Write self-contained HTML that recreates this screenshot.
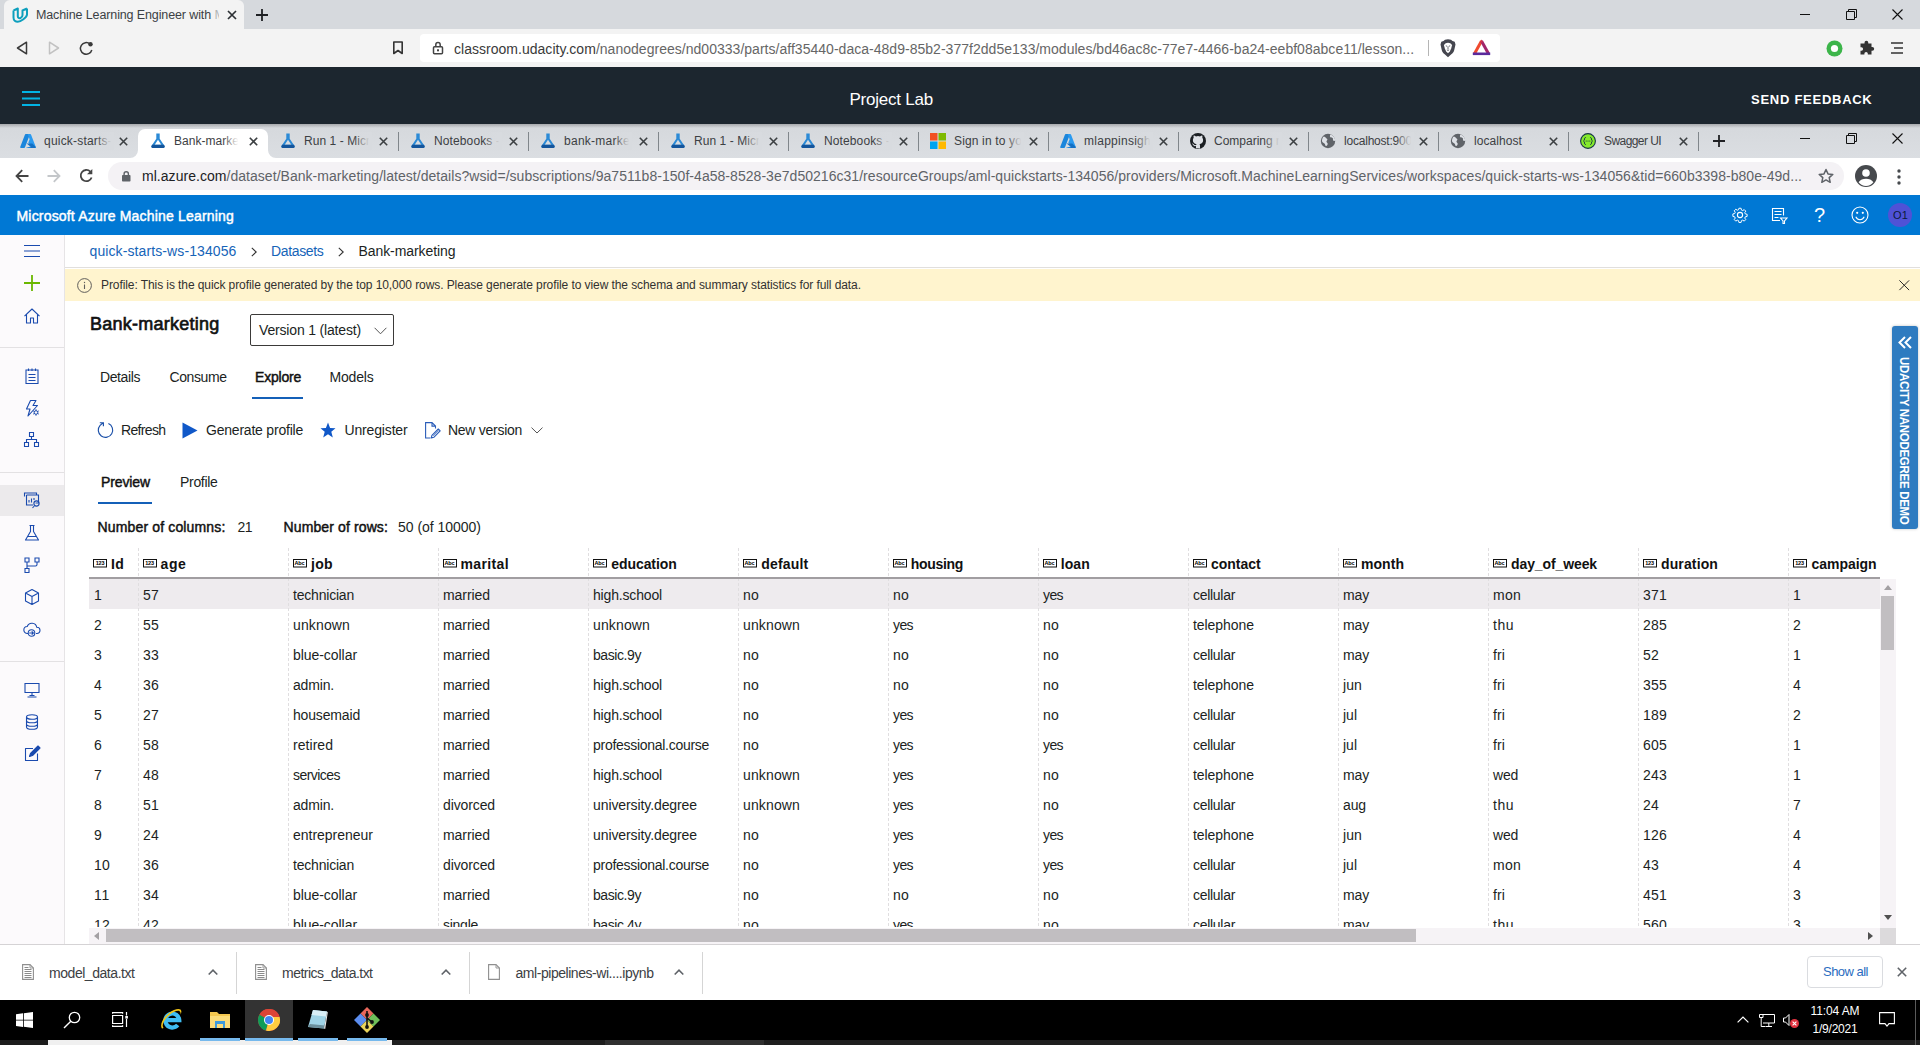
<!DOCTYPE html>
<html><head><meta charset="utf-8"><title>Bank-marketing</title>
<style>
*{box-sizing:border-box;margin:0;padding:0}
html,body{width:1920px;height:1045px;overflow:hidden;background:#fff;font-family:"Liberation Sans",sans-serif;color:#201f1e}
.abs{position:absolute}
#root{position:relative;width:1920px;height:1045px;overflow:hidden}
.t{position:absolute;white-space:nowrap}
svg{position:absolute;overflow:visible}
</style></head><body><div id="root">
<!--OUTER-->
<div class="abs" style="left:0px;top:0px;width:1920px;height:29px;background:#d6d9dd;"></div>
<div class="abs" style="left:4px;top:0px;width:240px;height:29px;background:#f3f3f3;border-radius:6px 6px 0 0;"></div>
<div class="abs" style="left:0px;top:29px;width:1920px;height:38px;background:#f3f3f3;"></div>
<div class="abs" style="left:420px;top:34px;width:1080px;height:28px;background:#fff;border-radius:4px;"></div>
<svg style="left:11.5px;top:7px" width="17" height="16" viewBox="0 0 17 16"><path d="M1.500 3.500V10.500C1.500 13.200 3.500 14.800 5.800 14.800 8.500 14.800 15 10.500 15 7.500V1.500M1.500 3.500L5.800 1.500V9.300C5.800 10.800 7 11.500 8.500 11 9.800 10.500 10.500 9.500 10.500 8.300V3.500L15 1.500" fill="none" stroke="#0d9fbd" stroke-width="2" stroke-linejoin="round" stroke-linecap="butt"/></svg>
<div class="t" style="left:36px;top:6px;font-size:12.5px;line-height:18px;color:#3b3f44;letter-spacing:-0.120px;">Machine Learning Engineer with</div>
<div class="t" style="left:214.5px;top:6px;font-size:12.5px;line-height:18px;color:#3b3f44;width:4px;overflow:hidden;opacity:.35;">M</div>
<svg style="left:227px;top:10px" width="10" height="10" viewBox="0 0 10 10"><path d="M1 1l8 8M9 1l-8 8" stroke="#2d3135" stroke-width="1.700" fill="none"/></svg>
<svg style="left:256px;top:9px" width="12" height="12" viewBox="0 0 12 12"><path d="M6 0v12M0 6h12" stroke="#1f2124" stroke-width="1.800" fill="none"/></svg>
<svg style="left:1800px;top:14px" width="10" height="2" viewBox="0 0 10 2"><path d="M0 .5h10" stroke="#111" stroke-width="1"/></svg>
<svg style="left:1846px;top:9px" width="11" height="11" viewBox="0 0 11 11"><path d="M.5 2.500h8v8h-8zM2.500 2.500v-2h8v8h-2" stroke="#111" stroke-width="1" fill="none"/></svg>
<svg style="left:1892px;top:9px" width="11" height="11" viewBox="0 0 11 11"><path d="M.5.5l10 10M10.500.5l-10 10" stroke="#111" stroke-width="1.100" fill="none"/></svg>
<svg style="left:16px;top:41px" width="12" height="14" viewBox="0 0 12 14"><path d="M10.500 1.200L1.500 7l9 5.800z" stroke="#3a3a3a" stroke-width="1.500" fill="none" stroke-linejoin="round"/></svg>
<svg style="left:48px;top:41px" width="12" height="14" viewBox="0 0 12 14"><path d="M1.500 1.200L10.500 7l-9 5.800z" stroke="#c2c2c2" stroke-width="1.500" fill="none" stroke-linejoin="round"/></svg>
<svg style="left:79px;top:41px" width="15" height="15" viewBox="0 0 15 15"><path d="M12.800 9A5.800 5.800 0 1 1 11 3" stroke="#3a3a3a" stroke-width="1.500" fill="none"/><circle cx="11.500" cy="3.300" r="2.200" fill="#3a3a3a"/></svg>
<svg style="left:392px;top:41px" width="12" height="14" viewBox="0 0 12 14"><path d="M1.800 1h8.400v11.500L6 9.500l-4.200 3z" stroke="#333" stroke-width="1.600" fill="none" stroke-linejoin="round"/></svg>
<svg style="left:432px;top:41px" width="12" height="14" viewBox="0 0 12 14"><rect x="1.500" y="5.800" width="9" height="7" rx="1" stroke="#444" stroke-width="1.500" fill="none"/><path d="M3.800 5.800V3.800a2.200 2.200 0 0 1 4.400 0v2" stroke="#444" stroke-width="1.500" fill="none"/><rect x="5" y="8.300" width="2" height="2" fill="#444"/></svg>
<div class="t" style="left:454px;top:38.500px;font-size:14px;line-height:20px;color:#666;letter-spacing:0.025px"><span style="color:#3a3a3a">classroom.udacity.com</span>/nanodegrees/nd00333/parts/aff35440-daca-48d9-85b2-377f2dd5e133/modules/bd46ac8c-77e7-4466-ba24-eebf08abce11/lesson...</div>
<div class="abs" style="left:1428px;top:40px;width:1px;height:16px;background:#b5b5b5;"></div>
<svg style="left:1440px;top:38.5px" width="16" height="18.5" viewBox="0 0 16 18.5"><path d="M8 .3l3 .4 1.500 1.400 2.200.7.800 2.600-1.300 5.800c-.4 1.700-1.500 3-2.900 4.100L8 18.200l-3.300-2.900c-1.400-1.100-2.500-2.400-2.900-4.100L.5 5.400l.8-2.600 2.200-.7L5 .7z" fill="#45464f"/><path d="M8 3.800l2.300.5 1.800 1.700-.9 3.600-1.400 2.800L8 14.300l-1.800-1.900-1.400-2.800-.9-3.600 1.800-1.700z" fill="#fff"/><path d="M5.800 6.800l1.400.5M10.200 6.800l-1.400.5M8 7.500v2.700M6.900 10.800l1.100.7 1.100-.7" stroke="#45464f" stroke-width=".8" fill="none"/></svg>
<svg style="left:1472px;top:39.3px" width="19" height="17" viewBox="0 0 19 17"><path d="M2.200 15.200L9.500 2" stroke="#f04a2e" stroke-width="3" stroke-linecap="butt"/><path d="M16.800 15.200L9.500 2" stroke="#a0256b" stroke-width="3"/><path d="M.8 14.800h17.400" stroke="#5a2a9c" stroke-width="2.600"/><path d="M9.500 .6l1.700 3h-3.400z" fill="#d0304a"/></svg>
<svg style="left:1826px;top:40px" width="17" height="17" viewBox="0 0 17 17"><circle cx="8.500" cy="8.500" r="8" fill="#3cb54a"/><circle cx="8.500" cy="8.500" r="3.600" fill="#fff"/></svg>
<svg style="left:1858px;top:40px" width="17" height="17" viewBox="0 0 17 17"><path d="M6.500 2.700a1.900 1.900 0 0 1 3.800 0v.8h3.200v3.400h.8a1.900 1.900 0 0 1 0 3.800h-.8v3.800H9.800v-.9a1.700 1.700 0 0 0-3.400 0v.9H2.500v-3.800h.9a1.700 1.700 0 0 0 0-3.400h-.9V3.500h4z" fill="#333"/></svg>
<svg style="left:1890px;top:41px" width="14" height="14" viewBox="0 0 14 14"><path d="M1 2h12M4 7h9M1 12h12" stroke="#333" stroke-width="1.700" fill="none"/></svg>
<div class="abs" style="left:0px;top:67px;width:1920px;height:57px;background:#1c262f;"></div>
<svg style="left:22px;top:91px" width="18" height="15" viewBox="0 0 18 15"><path d="M0 1h18M0 7.500h18M0 14h18" stroke="#02b3e4" stroke-width="1.800" fill="none"/></svg>
<div class="t" style="left:849.5px;top:88px;font-size:17px;line-height:24px;color:#fff;letter-spacing:-0.227px;">Project Lab</div>
<div class="t" style="left:1751px;top:90.7px;font-size:13px;line-height:18px;color:#fff;font-weight:bold;letter-spacing:0.734px;">SEND FEEDBACK</div>
<!--INNER-->
<div class="abs" style="left:0px;top:124px;width:1920px;height:34px;background:linear-gradient(180deg,#d5d8dc,#dbdee2);"></div>
<div class="abs" style="left:0px;top:124px;width:1920px;height:4px;background:linear-gradient(180deg,rgba(0,0,0,.22),rgba(0,0,0,0));"></div>
<div class="abs" style="left:138px;top:129px;width:130px;height:29px;background:#fff;border-radius:7px 7px 0 0;"></div>
<svg style="left:130px;top:150px" width="8" height="8" viewBox="0 0 8 8"><path d="M8 0v8H0a8 8 0 0 0 8-8z" fill="#fff"/></svg>
<svg style="left:268px;top:150px" width="8" height="8" viewBox="0 0 8 8"><path d="M0 0v8h8a8 8 0 0 1-8-8z" fill="#fff"/></svg>
<div class="abs" style="left:0px;top:158px;width:1920px;height:37px;background:#fff;"></div>
<div class="abs" style="left:108px;top:162px;width:1736px;height:28px;background:#f4f2f5;border-radius:14px;"></div>
<svg style="left:20px;top:133px" width="16" height="16" viewBox="0 0 16 16"><path d="M5.800 1h4.300L5 14.300c-.1.400-.5.700-.9.700H.8c-.5 0-.8-.5-.6-.9L4.900 1.700c.1-.4.500-.7.900-.7z" fill="#1b86dc"/><path d="M10.200 1c.4 0 .8.300.9.700l4.700 12.400c.2.400-.1.900-.6.900H5.800l5.300-1.800c.3-.1.400-.4.200-.600L8.300 9.800l1.300-3.500-1.900-5.300z" fill="#2a9af0"/><path d="M12.300 10.500H6.600l4.700 3.800-5.500.7h9.400c.5 0 .8-.5.600-.9z" fill="#1470c4"/></svg>
<div class="t" style="left:44px;top:132.5px;font-size:12px;line-height:17px;color:#3c4043;letter-spacing:0.204px;width:68px;overflow:hidden;">quick-starts-</div>
<div class="abs" style="left:96px;top:132px;width:18px;height:18px;background:linear-gradient(90deg,rgba(222,225,230,0),#d8dbdf 85%);"></div>
<svg style="left:119px;top:137px" width="9" height="9" viewBox="0 0 9 9"><path d="M.8.800l7.400 7.400M8.200.800L.8 8.200" stroke="#3c4043" stroke-width="1.600" fill="none"/></svg>
<svg style="left:150px;top:133px" width="16" height="16" viewBox="0 0 16 16"><path d="M6.300.5h3.400v5.300l4.700 6.900c.7 1-.1 2.300-1.200 2.300H2.800c-1.100 0-1.900-1.300-1.200-2.300l4.700-6.900z" fill="#2b8ad6"/><path d="M8 6.800l3.300 5H4.700z" fill="#fff"/><path d="M2.100 11.800h11.800l.6.900c.7 1-.1 2.300-1.200 2.300H2.800c-1.100 0-1.900-1.300-1.200-2.300z" fill="#14559b"/></svg>
<div class="t" style="left:174px;top:132.5px;font-size:12px;line-height:17px;color:#3c4043;letter-spacing:0.031px;width:65px;overflow:hidden;">Bank-marke</div>
<div class="abs" style="left:223px;top:132px;width:18px;height:18px;background:linear-gradient(90deg,rgba(255,255,255,0),#fff 85%);"></div>
<svg style="left:249px;top:137px" width="9" height="9" viewBox="0 0 9 9"><path d="M.8.800l7.400 7.400M8.200.800L.8 8.200" stroke="#3c4043" stroke-width="1.600" fill="none"/></svg>
<svg style="left:280px;top:133px" width="16" height="16" viewBox="0 0 16 16"><path d="M6.300.5h3.400v5.300l4.700 6.900c.7 1-.1 2.300-1.200 2.300H2.800c-1.100 0-1.900-1.300-1.200-2.300l4.700-6.900z" fill="#2b8ad6"/><path d="M8 6.800l3.300 5H4.700z" fill="#d8dbdf"/><path d="M2.100 11.800h11.800l.6.900c.7 1-.1 2.300-1.200 2.300H2.800c-1.100 0-1.900-1.300-1.200-2.300z" fill="#14559b"/></svg>
<div class="t" style="left:304px;top:132.5px;font-size:12px;line-height:17px;color:#3c4043;letter-spacing:0.055px;width:66px;overflow:hidden;">Run 1 - Micr</div>
<div class="abs" style="left:354px;top:132px;width:18px;height:18px;background:linear-gradient(90deg,rgba(222,225,230,0),#d8dbdf 85%);"></div>
<svg style="left:379px;top:137px" width="9" height="9" viewBox="0 0 9 9"><path d="M.8.800l7.400 7.400M8.200.800L.8 8.200" stroke="#3c4043" stroke-width="1.600" fill="none"/></svg>
<div class="abs" style="left:398px;top:132px;width:1px;height:19px;background:#80868b;"></div>
<svg style="left:410px;top:133px" width="16" height="16" viewBox="0 0 16 16"><path d="M6.300.5h3.400v5.300l4.700 6.900c.7 1-.1 2.300-1.200 2.300H2.800c-1.100 0-1.900-1.300-1.200-2.300l4.700-6.900z" fill="#2b8ad6"/><path d="M8 6.800l3.300 5H4.700z" fill="#d8dbdf"/><path d="M2.100 11.800h11.800l.6.900c.7 1-.1 2.300-1.200 2.300H2.800c-1.100 0-1.900-1.300-1.200-2.300z" fill="#14559b"/></svg>
<div class="t" style="left:434px;top:132.5px;font-size:12px;line-height:17px;color:#3c4043;letter-spacing:0.118px;width:66px;overflow:hidden;">Notebooks -</div>
<div class="abs" style="left:484px;top:132px;width:18px;height:18px;background:linear-gradient(90deg,rgba(222,225,230,0),#d8dbdf 85%);"></div>
<svg style="left:509px;top:137px" width="9" height="9" viewBox="0 0 9 9"><path d="M.8.800l7.400 7.400M8.200.800L.8 8.200" stroke="#3c4043" stroke-width="1.600" fill="none"/></svg>
<div class="abs" style="left:528px;top:132px;width:1px;height:19px;background:#80868b;"></div>
<svg style="left:540px;top:133px" width="16" height="16" viewBox="0 0 16 16"><path d="M6.300.5h3.400v5.300l4.700 6.900c.7 1-.1 2.300-1.200 2.300H2.800c-1.100 0-1.900-1.300-1.200-2.300l4.700-6.900z" fill="#2b8ad6"/><path d="M8 6.800l3.300 5H4.700z" fill="#d8dbdf"/><path d="M2.100 11.800h11.800l.6.900c.7 1-.1 2.300-1.200 2.300H2.800c-1.100 0-1.900-1.300-1.200-2.300z" fill="#14559b"/></svg>
<div class="t" style="left:564px;top:132.5px;font-size:12px;line-height:17px;color:#3c4043;letter-spacing:0.264px;width:66px;overflow:hidden;">bank-marke</div>
<div class="abs" style="left:614px;top:132px;width:18px;height:18px;background:linear-gradient(90deg,rgba(222,225,230,0),#d8dbdf 85%);"></div>
<svg style="left:639px;top:137px" width="9" height="9" viewBox="0 0 9 9"><path d="M.8.800l7.400 7.400M8.200.800L.8 8.200" stroke="#3c4043" stroke-width="1.600" fill="none"/></svg>
<div class="abs" style="left:658px;top:132px;width:1px;height:19px;background:#80868b;"></div>
<svg style="left:670px;top:133px" width="16" height="16" viewBox="0 0 16 16"><path d="M6.300.5h3.400v5.300l4.700 6.900c.7 1-.1 2.300-1.200 2.300H2.800c-1.100 0-1.900-1.300-1.200-2.300l4.700-6.900z" fill="#2b8ad6"/><path d="M8 6.800l3.300 5H4.700z" fill="#d8dbdf"/><path d="M2.100 11.800h11.800l.6.900c.7 1-.1 2.300-1.200 2.300H2.800c-1.100 0-1.900-1.300-1.200-2.300z" fill="#14559b"/></svg>
<div class="t" style="left:694px;top:132.5px;font-size:12px;line-height:17px;color:#3c4043;letter-spacing:0.055px;width:66px;overflow:hidden;">Run 1 - Micr</div>
<div class="abs" style="left:744px;top:132px;width:18px;height:18px;background:linear-gradient(90deg,rgba(222,225,230,0),#d8dbdf 85%);"></div>
<svg style="left:769px;top:137px" width="9" height="9" viewBox="0 0 9 9"><path d="M.8.800l7.400 7.400M8.200.800L.8 8.200" stroke="#3c4043" stroke-width="1.600" fill="none"/></svg>
<div class="abs" style="left:788px;top:132px;width:1px;height:19px;background:#80868b;"></div>
<svg style="left:800px;top:133px" width="16" height="16" viewBox="0 0 16 16"><path d="M6.300.5h3.400v5.300l4.700 6.900c.7 1-.1 2.300-1.200 2.300H2.800c-1.100 0-1.900-1.300-1.200-2.300l4.700-6.900z" fill="#2b8ad6"/><path d="M8 6.800l3.300 5H4.700z" fill="#d8dbdf"/><path d="M2.100 11.800h11.800l.6.900c.7 1-.1 2.300-1.200 2.300H2.800c-1.100 0-1.900-1.300-1.200-2.300z" fill="#14559b"/></svg>
<div class="t" style="left:824px;top:132.5px;font-size:12px;line-height:17px;color:#3c4043;letter-spacing:0.118px;width:66px;overflow:hidden;">Notebooks -</div>
<div class="abs" style="left:874px;top:132px;width:18px;height:18px;background:linear-gradient(90deg,rgba(222,225,230,0),#d8dbdf 85%);"></div>
<svg style="left:899px;top:137px" width="9" height="9" viewBox="0 0 9 9"><path d="M.8.800l7.400 7.400M8.200.800L.8 8.200" stroke="#3c4043" stroke-width="1.600" fill="none"/></svg>
<div class="abs" style="left:918px;top:132px;width:1px;height:19px;background:#80868b;"></div>
<svg style="left:930px;top:133px" width="16" height="16" viewBox="0 0 16 16"><rect x="0" y="0" width="7.500" height="7.500" fill="#f25022"/><rect x="8.500" y="0" width="7.500" height="7.500" fill="#7fba00"/><rect x="0" y="8.500" width="7.500" height="7.500" fill="#00a4ef"/><rect x="8.500" y="8.500" width="7.500" height="7.500" fill="#ffb900"/></svg>
<div class="t" style="left:954px;top:132.5px;font-size:12px;line-height:17px;color:#3c4043;letter-spacing:0.151px;width:68px;overflow:hidden;">Sign in to yo</div>
<div class="abs" style="left:1006px;top:132px;width:18px;height:18px;background:linear-gradient(90deg,rgba(222,225,230,0),#d8dbdf 85%);"></div>
<svg style="left:1029px;top:137px" width="9" height="9" viewBox="0 0 9 9"><path d="M.8.800l7.400 7.400M8.200.800L.8 8.200" stroke="#3c4043" stroke-width="1.600" fill="none"/></svg>
<div class="abs" style="left:1048px;top:132px;width:1px;height:19px;background:#80868b;"></div>
<svg style="left:1060px;top:133px" width="16" height="16" viewBox="0 0 16 16"><path d="M5.800 1h4.300L5 14.300c-.1.400-.5.700-.9.700H.8c-.5 0-.8-.5-.6-.9L4.900 1.700c.1-.4.500-.7.900-.7z" fill="#1b86dc"/><path d="M10.200 1c.4 0 .8.300.9.700l4.700 12.400c.2.400-.1.900-.6.900H5.800l5.300-1.800c.3-.1.400-.4.200-.600L8.300 9.800l1.300-3.500-1.900-5.300z" fill="#2a9af0"/><path d="M12.300 10.500H6.600l4.700 3.800-5.500.7h9.400c.5 0 .8-.5.600-.9z" fill="#1470c4"/></svg>
<div class="t" style="left:1084px;top:132.5px;font-size:12px;line-height:17px;color:#3c4043;letter-spacing:0.269px;width:67px;overflow:hidden;">mlappinsigh</div>
<div class="abs" style="left:1135px;top:132px;width:18px;height:18px;background:linear-gradient(90deg,rgba(222,225,230,0),#d8dbdf 85%);"></div>
<svg style="left:1159px;top:137px" width="9" height="9" viewBox="0 0 9 9"><path d="M.8.800l7.400 7.400M8.200.800L.8 8.200" stroke="#3c4043" stroke-width="1.600" fill="none"/></svg>
<div class="abs" style="left:1178px;top:132px;width:1px;height:19px;background:#80868b;"></div>
<svg style="left:1190px;top:133px" width="16" height="16" viewBox="0 0 16 16"><circle cx="8" cy="8" r="8" fill="#1b1f23"/><path d="M6 15.300v-2.200c-2.300.5-2.800-1-2.800-1-.4-.9-.9-1.200-.9-1.200-.7-.5.100-.5.100-.5.800.1 1.300.9 1.300.9.700 1.200 1.900.9 2.400.7.100-.5.300-.9.500-1.100-1.800-.2-3.700-.9-3.700-4 0-.9.300-1.600.8-2.200-.1-.2-.4-1 .1-2.100 0 0 .7-.2 2.200.8a7.500 7.500 0 0 1 4 0c1.500-1 2.200-.8 2.200-.8.400 1.100.2 1.900.1 2.100.5.600.8 1.300.8 2.200 0 3.100-1.900 3.800-3.700 4 .3.300.6.800.6 1.500v3z" fill="#dee1e6"/></svg>
<div class="t" style="left:1214px;top:132.5px;font-size:12px;line-height:17px;color:#3c4043;letter-spacing:-0.002px;width:66px;overflow:hidden;">Comparing r</div>
<div class="abs" style="left:1264px;top:132px;width:18px;height:18px;background:linear-gradient(90deg,rgba(222,225,230,0),#d8dbdf 85%);"></div>
<svg style="left:1289px;top:137px" width="9" height="9" viewBox="0 0 9 9"><path d="M.8.800l7.400 7.400M8.200.800L.8 8.200" stroke="#3c4043" stroke-width="1.600" fill="none"/></svg>
<div class="abs" style="left:1308px;top:132px;width:1px;height:19px;background:#80868b;"></div>
<svg style="left:1320px;top:133px" width="16" height="16" viewBox="0 0 16 16"><circle cx="8" cy="8" r="7.200" fill="#5f6368"/><path d="M3.200 3.800c1.200-.4 2.300 0 2.600 1 .3.900 1.500.8 1.600 1.800.1.800-1 1.300-.9 2.200.1.800 1.200 1 1.200 2s-.8 2.400-1.700 2.300c-.9-.1-.6-1.500-1.300-2.300-.7-.8-2.200-.9-2.600-2.200-.3-1 .2-3.500 1.100-4.800zM10 1.600c.4.900-.5 1.600.2 2.400.7.800 2 .3 2.600 1.200.5.700-.2 1.500.4 2.300.4.500 1.500.5 2 .1-.1-2.700-2.400-5.300-5.200-6z" fill="#dee1e6"/></svg>
<div class="t" style="left:1344px;top:132.5px;font-size:12px;line-height:17px;color:#3c4043;letter-spacing:-0.209px;width:68px;overflow:hidden;">localhost:900</div>
<div class="abs" style="left:1396px;top:132px;width:18px;height:18px;background:linear-gradient(90deg,rgba(222,225,230,0),#d8dbdf 85%);"></div>
<svg style="left:1419px;top:137px" width="9" height="9" viewBox="0 0 9 9"><path d="M.8.800l7.400 7.400M8.200.800L.8 8.200" stroke="#3c4043" stroke-width="1.600" fill="none"/></svg>
<div class="abs" style="left:1438px;top:132px;width:1px;height:19px;background:#80868b;"></div>
<svg style="left:1450px;top:133px" width="16" height="16" viewBox="0 0 16 16"><circle cx="8" cy="8" r="7.200" fill="#5f6368"/><path d="M3.200 3.800c1.200-.4 2.300 0 2.600 1 .3.900 1.500.8 1.600 1.800.1.800-1 1.300-.9 2.200.1.800 1.200 1 1.200 2s-.8 2.400-1.700 2.300c-.9-.1-.6-1.500-1.300-2.300-.7-.8-2.200-.9-2.600-2.200-.3-1 .2-3.500 1.100-4.800zM10 1.600c.4.900-.5 1.600.2 2.400.7.800 2 .3 2.600 1.200.5.700-.2 1.500.4 2.300.4.500 1.500.5 2 .1-.1-2.700-2.400-5.300-5.200-6z" fill="#dee1e6"/></svg>
<div class="t" style="left:1474px;top:132.5px;font-size:12px;line-height:17px;color:#3c4043;letter-spacing:0.071px;">localhost</div>
<svg style="left:1549px;top:137px" width="9" height="9" viewBox="0 0 9 9"><path d="M.8.800l7.400 7.400M8.200.800L.8 8.200" stroke="#3c4043" stroke-width="1.600" fill="none"/></svg>
<div class="abs" style="left:1568px;top:132px;width:1px;height:19px;background:#80868b;"></div>
<svg style="left:1580px;top:133px" width="16" height="16" viewBox="0 0 16 16"><circle cx="8" cy="8" r="7.400" fill="#85ea2d" stroke="#173647" stroke-width="1.100"/><path d="M5.800 4.500c-1.300 0-1.300.8-1.300 1.600 0 1-.3 1.600-1 1.900.7.300 1 .9 1 1.900 0 .8 0 1.600 1.300 1.600M10.200 4.500c1.300 0 1.300.8 1.300 1.600 0 1 .3 1.600 1 1.900-.7.300-1 .9-1 1.900 0 .8 0 1.600-1.300 1.600" fill="none" stroke="#173647" stroke-width="1"/><circle cx="6.200" cy="8" r=".6" fill="#173647"/><circle cx="8" cy="8" r=".6" fill="#173647"/><circle cx="9.800" cy="8" r=".6" fill="#173647"/></svg>
<div class="t" style="left:1604px;top:132.5px;font-size:12px;line-height:17px;color:#3c4043;letter-spacing:-0.570px;">Swagger UI</div>
<svg style="left:1679px;top:137px" width="9" height="9" viewBox="0 0 9 9"><path d="M.8.800l7.400 7.400M8.200.800L.8 8.200" stroke="#3c4043" stroke-width="1.600" fill="none"/></svg>
<div class="abs" style="left:1698px;top:132px;width:1px;height:19px;background:#80868b;"></div>
<svg style="left:1713px;top:135px" width="12" height="12" viewBox="0 0 12 12"><path d="M6 0v12M0 6h12" stroke="#202124" stroke-width="1.800" fill="none"/></svg>
<svg style="left:1800px;top:138px" width="10" height="2" viewBox="0 0 10 2"><path d="M0 .5h10" stroke="#111" stroke-width="1"/></svg>
<svg style="left:1846px;top:133px" width="11" height="11" viewBox="0 0 11 11"><path d="M.5 2.500h8v8h-8zM2.500 2.500v-2h8v8h-2" stroke="#111" stroke-width="1" fill="none"/></svg>
<svg style="left:1892px;top:133px" width="11" height="11" viewBox="0 0 11 11"><path d="M.5.5l10 10M10.500.5l-10 10" stroke="#111" stroke-width="1.100" fill="none"/></svg>
<svg style="left:15px;top:169px" width="14" height="14" viewBox="0 0 14 14"><path d="M13.500 7H1.800M7.200 1.200L1.500 7l5.700 5.800" stroke="#444" stroke-width="1.800" fill="none"/></svg>
<svg style="left:47px;top:169px" width="14" height="14" viewBox="0 0 14 14"><path d="M.5 7h11.700M6.800 1.200L12.500 7l-5.700 5.800" stroke="#c4c7ca" stroke-width="1.800" fill="none"/></svg>
<svg style="left:79px;top:168px" width="15" height="15" viewBox="0 0 15 15"><path d="M12.600 9.500A5.600 5.600 0 1 1 11.300 3.600" stroke="#444" stroke-width="1.800" fill="none"/><path d="M13.300 1v5.300H8z" fill="#444"/></svg>
<svg style="left:122px;top:170.5px" width="8.5" height="10.5" viewBox="0 0 8.5 10.5"><rect x="0" y="4" width="8.500" height="6.500" rx=".8" fill="#5f6368"/><path d="M2.100 4.500V2.900a2.150 2.150 0 0 1 4.300 0v1.600" stroke="#5f6368" stroke-width="1.400" fill="none"/></svg>
<div class="t" style="left:142px;top:166px;font-size:14px;line-height:20px;color:#5f6368;letter-spacing:0.039px"><span style="color:#202124">ml.azure.com</span>/dataset/Bank-marketing/latest/details?wsid=/subscriptions/9a7511b8-150f-4a58-8528-3e7d50216c31/resourceGroups/aml-quickstarts-134056/providers/Microsoft.MachineLearningServices/workspaces/quick-starts-ws-134056&amp;tid=660b3398-b80e-49d...</div>
<svg style="left:1818px;top:168px" width="16" height="16" viewBox="0 0 16 16"><path d="M8 1.500l2 4.400 4.800.5-3.600 3.200 1 4.700L8 11.900l-4.200 2.400 1-4.700L1.200 6.400l4.800-.5z" stroke="#5f6368" stroke-width="1.500" fill="none" stroke-linejoin="round"/></svg>
<svg style="left:1855px;top:165px" width="22" height="22" viewBox="0 0 22 22"><circle cx="11" cy="11" r="11" fill="#46494d"/><circle cx="11" cy="8" r="3.800" fill="#fff"/><path d="M3.600 17.300c1.500-2.600 4.400-3.600 7.400-3.600s5.900 1 7.400 3.600a9.300 9.300 0 0 1-14.800 0z" fill="#fff"/></svg>
<svg style="left:1896.5px;top:169px" width="4" height="16" viewBox="0 0 4 16"><circle cx="2" cy="2" r="1.700" fill="#46494d"/><circle cx="2" cy="8" r="1.700" fill="#46494d"/><circle cx="2" cy="14" r="1.700" fill="#46494d"/></svg>
<div class="abs" style="left:0px;top:195px;width:1920px;height:40px;background:#0078d4;"></div>
<div class="t" style="left:16.5px;top:206px;font-size:14px;line-height:20px;color:#fff;-webkit-text-stroke:.45px #fff;letter-spacing:0.182px;">Microsoft Azure Machine Learning</div>
<svg style="left:1731px;top:206px" width="18" height="18" viewBox="0 0 18 18"><g fill="none" stroke="#fff" stroke-width="1.100"><circle cx="9" cy="9" r="2.600"/><path d="M7.800 1.500h2.400l.4 2 1.400.6 1.700-1.100 1.700 1.700-1.100 1.700.6 1.400 2 .4v2.400l-2 .4-.6 1.400 1.100 1.700-1.700 1.700-1.700-1.100-1.400.6-.4 2H7.800l-.4-2-1.400-.6-1.700 1.100-1.700-1.700 1.100-1.700-.6-1.400-2-.4V7.800l2-.4.600-1.400-1.100-1.700 1.700-1.700 1.700 1.100 1.400-.6z" transform="translate(.9 .9) scale(.9)"/></g></svg>
<svg style="left:1771px;top:207px" width="17" height="17" viewBox="0 0 17 17"><g fill="none" stroke="#fff" stroke-width="1.100"><path d="M9 13.500H1.500V1.500h11v7"/><path d="M3.500 4.500h7M3.500 7.500h7M3.500 10.500h4"/><path d="M9.500 11h6.500l-2.500 3v2.500h-1.500V14z"/></g></svg>
<div class="t" style="left:1814px;top:201px;font-size:20px;line-height:28px;color:#fff;">?</div>
<svg style="left:1851px;top:206px" width="18" height="18" viewBox="0 0 18 18"><g fill="none" stroke="#fff" stroke-width="1.100"><circle cx="9" cy="9" r="8"/><path d="M4.800 10.800c1 2 2.500 2.900 4.200 2.900s3.200-.9 4.200-2.900"/></g><circle cx="6.200" cy="6.800" r="1.100" fill="#fff"/><circle cx="11.800" cy="6.800" r="1.100" fill="#fff"/></svg>
<svg style="left:1888px;top:203px" width="24" height="24" viewBox="0 0 24 24"><circle cx="12" cy="12" r="12" fill="#4f52d6"/></svg>
<div class="t" style="left:1893px;top:207.5px;font-size:11px;line-height:15px;color:#0b1a3a;letter-spacing:0.163px;">O1</div>
<!--AZURE-->
<div class="abs" style="left:0px;top:235px;width:64px;height:710px;background:#fcfafc;"></div>
<div class="abs" style="left:64px;top:235px;width:1px;height:710px;background:#e6e4e6;"></div>
<div class="abs" style="left:0px;top:347px;width:64px;height:1px;background:#e3e1e3;"></div>
<div class="abs" style="left:0px;top:472px;width:64px;height:1px;background:#e3e1e3;"></div>
<div class="abs" style="left:0px;top:661px;width:64px;height:1px;background:#e3e1e3;"></div>
<div class="abs" style="left:0px;top:485px;width:64px;height:31px;background:#eceaec;"></div>
<svg style="left:23px;top:242px" width="18" height="18" viewBox="0 0 18 18"><path d="M1 3.500h16M1 9h16M1 14.500h16" fill="none" stroke="#1a4aae" stroke-width="1.200"/></svg>
<svg style="left:23px;top:274px" width="18" height="18" viewBox="0 0 18 18"><path d="M9 1v16M1 9h16" fill="none" stroke="#6bb700" stroke-width="1.800"/></svg>
<svg style="left:23px;top:307px" width="18" height="18" viewBox="0 0 18 18"><path d="M1.500 9.200L9 2l7.500 7.200M3.500 7.800V16h4v-5h3v5h4V7.800" fill="none" stroke="#1a4aae" stroke-width="1.100" stroke-linejoin="round"/></svg>
<svg style="left:23px;top:367px" width="18" height="18" viewBox="0 0 18 18"><path d="M3 3h12v13.500H3zM5.500 1.500v2.500M9 1.500v2.500M12.500 1.500v2.500M5.500 7.500h7M5.500 10.500h7M5.500 13.500h7" fill="none" stroke="#1a4aae" stroke-width="1.100"/></svg>
<svg style="left:23px;top:399px" width="18" height="18" viewBox="0 0 18 18"><path d="M7.500 1.500h5.500l-3 5h4.500L5 17l2-7H3.500z" fill="none" stroke="#1a4aae" stroke-width="1.100" stroke-linejoin="round"/><circle cx="13" cy="13.500" r="1.800" fill="#fcfafc" stroke="#1a4aae" stroke-width="1"/><path d="M13 10.300v1.400M13 15.300v1.400M10.200 11.900l1.200.7M14.600 14.400l1.200.7M10.200 15.100l1.200-.7M14.600 12.600l1.200-.7" stroke="#1a4aae" stroke-width="1"/></svg>
<svg style="left:23px;top:430px" width="18" height="18" viewBox="0 0 18 18"><path d="M6.500 2.500h4v4h-4zM1.500 12.500h4v4h-4zM11.500 12.500h4v4h-4zM8.500 6.500v3M3.500 12.500v-3h10v3" fill="none" stroke="#1a4aae" stroke-width="1.100"/></svg>
<svg style="left:23px;top:491px" width="18" height="18" viewBox="0 0 18 18"><path d="M1.500 5.500V2h12v2M3.500 4h12v8h-3M3.500 4v10h6.500M6 11.500V9M8.500 11.500V7.500M11 9v-2" fill="none" stroke="#1a4aae" stroke-width="1.100"/><circle cx="13.500" cy="12.500" r="2.600" fill="none" stroke="#1a4aae" stroke-width="1.100"/><path d="M11.700 14.500L9.500 17" fill="none" stroke="#1a4aae" stroke-width="1.100"/></svg>
<svg style="left:23px;top:524px" width="18" height="18" viewBox="0 0 18 18"><path d="M6.500 1.500h5M7.500 1.500v6L2.500 16h13L10.500 7.500v-6M4.500 12.500h9" fill="none" stroke="#1a4aae" stroke-width="1.100" stroke-linejoin="round"/></svg>
<svg style="left:23px;top:556px" width="18" height="18" viewBox="0 0 18 18"><path d="M2 2h4v4H2zM12 2h4v4h-4zM2 12.500h4v4H2zM4 6v6.500M14 6v2.500c0 1-.5 1.500-1.500 1.500H4" fill="none" stroke="#1a4aae" stroke-width="1.100"/></svg>
<svg style="left:23px;top:588px" width="18" height="18" viewBox="0 0 18 18"><path d="M9 1.500l6.500 3.500v8L9 16.500 2.500 13V5zM2.500 5L9 8.500 15.500 5M9 8.500v8" fill="none" stroke="#1a4aae" stroke-width="1.100" stroke-linejoin="round"/></svg>
<svg style="left:23px;top:620px" width="18" height="18" viewBox="0 0 18 18"><path d="M5 13.500H4.500a3.500 3.500 0 0 1-.3-7 5 5 0 0 1 9.600 0.800 3.100 3.100 0 0 1 .2 6.200h-1" fill="none" stroke="#1a4aae" stroke-width="1.100"/><circle cx="8.500" cy="13" r="3.300" fill="none" stroke="#1a4aae" stroke-width="1.100"/><path d="M6.200 13h4M8.700 11.300l1.700 1.700-1.700 1.700" fill="none" stroke="#1a4aae" stroke-width="1.100"/></svg>
<svg style="left:23px;top:681px" width="18" height="18" viewBox="0 0 18 18"><path d="M2 2.500h14v9H2zM9 11.500v3M4.500 16h9M6.500 14.500h5" fill="none" stroke="#1a4aae" stroke-width="1.100"/></svg>
<svg style="left:23px;top:713px" width="18" height="18" viewBox="0 0 18 18"><ellipse cx="9" cy="4" rx="5.500" ry="2.300" fill="none" stroke="#1a4aae" stroke-width="1.100"/><path d="M3.500 4v10c0 1.300 2.500 2.300 5.500 2.300s5.500-1 5.500-2.300V4M3.500 7.500c0 1.300 2.500 2.300 5.500 2.300s5.500-1 5.500-2.300M3.500 11c0 1.300 2.500 2.300 5.500 2.300s5.500-1 5.500-2.300" fill="none" stroke="#1a4aae" stroke-width="1.100"/></svg>
<svg style="left:23px;top:745px" width="18" height="18" viewBox="0 0 18 18"><path d="M14.500 8.500V15.500H2.500V3.500H10M6.500 11.500l1-3L15 1l2 2-7.500 7.500z" fill="none" stroke="#1a4aae" stroke-width="1.100" stroke-linejoin="round"/><path d="M7.500 8.500L15 1l2 2-7.500 7.500-3 1z" fill="#1a4aae"/></svg>
<div class="t" style="left:89.5px;top:241px;font-size:14px;line-height:20px;color:#1664b8;letter-spacing:0.103px;">quick-starts-ws-134056</div>
<svg style="left:251px;top:246.5px" width="6" height="10" viewBox="0 0 6 10"><path d="M.8.800L5.200 5 .8 9.200" fill="none" stroke="#333" stroke-width="1.100"/></svg>
<div class="t" style="left:271px;top:241px;font-size:14px;line-height:20px;color:#1664b8;letter-spacing:-0.344px;">Datasets</div>
<svg style="left:338px;top:246.5px" width="6" height="10" viewBox="0 0 6 10"><path d="M.8.800L5.200 5 .8 9.200" fill="none" stroke="#333" stroke-width="1.100"/></svg>
<div class="t" style="left:358.5px;top:241px;font-size:14px;line-height:20px;color:#201f1e;letter-spacing:-0.074px;">Bank-marketing</div>
<div class="abs" style="left:65px;top:267px;width:1855px;height:1px;background:#e1dfdd;"></div>
<div class="abs" style="left:65px;top:269px;width:1855px;height:32px;background:#fff4ce;"></div>
<svg style="left:77px;top:277.5px" width="15" height="15" viewBox="0 0 15 15"><circle cx="7.500" cy="7.500" r="6.900" fill="none" stroke="#605e5c" stroke-width="1"/><path d="M7.500 6.500v4.500" stroke="#605e5c" stroke-width="1.100"/><circle cx="7.500" cy="4.500" r=".7" fill="#605e5c"/></svg>
<div class="t" style="left:101px;top:276.5px;font-size:12px;line-height:17px;color:#323130;letter-spacing:-0.082px;">Profile: This is the quick profile generated by the top 10,000 rows. Please generate profile to view the schema and summary statistics for full data.</div>
<svg style="left:1898.5px;top:280px" width="10.5" height="10.5" viewBox="0 0 10.5 10.5"><path d="M.4.400l9.700 9.700M10.100.4L.4 10.100" stroke="#201f1e" stroke-width=".95" fill="none"/></svg>
<div class="t" style="left:90px;top:311.5px;font-size:18px;line-height:25px;color:#111;-webkit-text-stroke:.45px #111;letter-spacing:0.246px;-webkit-text-stroke-width:.65px;">Bank-marketing</div>
<div class="abs" style="left:250px;top:314px;width:144px;height:32px;background:#fff;border:1px solid #3b3a39;border-radius:2px;"></div>
<div class="t" style="left:259px;top:320px;font-size:14px;line-height:20px;color:#201f1e;letter-spacing:-0.169px;">Version 1 (latest)</div>
<svg style="left:373.5px;top:326.5px" width="13" height="8" viewBox="0 0 13 8"><path d="M.6.800L6.500 6.800 12.400.8" fill="none" stroke="#555" stroke-width="1"/></svg>
<div class="t" style="left:100px;top:367px;font-size:14px;line-height:20px;color:#201f1e;letter-spacing:-0.399px;">Details</div>
<div class="t" style="left:169.5px;top:367px;font-size:14px;line-height:20px;color:#201f1e;letter-spacing:-0.417px;">Consume</div>
<div class="t" style="left:255px;top:367px;font-size:14px;line-height:20px;color:#111;-webkit-text-stroke:.45px #111;letter-spacing:-0.210px;">Explore</div>
<div class="t" style="left:329.5px;top:367px;font-size:14px;line-height:20px;color:#201f1e;letter-spacing:-0.188px;">Models</div>
<div class="abs" style="left:252px;top:397px;width:51px;height:2px;background:#1460b8;"></div>
<svg style="left:96.5px;top:422px" width="16" height="16" viewBox="0 0 16 16"><path d="M11.400 1.500A7.200 7.200 0 1 1 3.100 3.300L6.200.8M2.800.700h3.600v3.600" fill="none" stroke="#1a4fa8" stroke-width="1.150"/></svg>
<div class="t" style="left:121px;top:420px;font-size:14px;line-height:20px;color:#201f1e;letter-spacing:-0.646px;">Refresh</div>
<svg style="left:182px;top:421.5px" width="16" height="17" viewBox="0 0 16 17"><path d="M.5.5L15.500 8.500.5 16.500z" fill="#1058c8"/></svg>
<div class="t" style="left:206px;top:420px;font-size:14px;line-height:20px;color:#201f1e;letter-spacing:-0.212px;">Generate profile</div>
<svg style="left:320px;top:421.5px" width="16" height="16" viewBox="0 0 16 16"><path d="M8 .5l2.100 5.500 5.400.2-4.200 3.600 1.500 5.700L8 12.300 3.200 15.500l1.500-5.700L.5 6.200l5.400-.2z" fill="#1058c8"/></svg>
<div class="t" style="left:344.5px;top:420px;font-size:14px;line-height:20px;color:#201f1e;letter-spacing:-0.158px;">Unregister</div>
<svg style="left:424.5px;top:421.5px" width="16" height="17" viewBox="0 0 16 17"><path d="M5.500 16H.6V.6h6.400l3.500 3.500v2.400M7 .6v3.500h3.500" fill="none" stroke="#2a5cb8" stroke-width="1.100"/><path d="M13.300 7l1.900 1.900-6.400 6.400-2.500.6.600-2.500z" fill="#fff" stroke="#2a5cb8" stroke-width="1.100" stroke-linejoin="round"/><path d="M8.300 13.900l5.500-5.500" stroke="#2a5cb8" stroke-width=".8"/></svg>
<div class="t" style="left:448px;top:420px;font-size:14px;line-height:20px;color:#201f1e;letter-spacing:-0.275px;">New version</div>
<svg style="left:531px;top:427px" width="12" height="7" viewBox="0 0 12 7"><path d="M.5.600L6 6 11.500.6" fill="none" stroke="#555" stroke-width="1"/></svg>
<div class="t" style="left:101px;top:472px;font-size:14px;line-height:20px;color:#111;-webkit-text-stroke:.45px #111;letter-spacing:-0.113px;">Preview</div>
<div class="t" style="left:180px;top:472px;font-size:14px;line-height:20px;color:#201f1e;letter-spacing:-0.312px;">Profile</div>
<div class="abs" style="left:98px;top:501.5px;width:54px;height:2px;background:#1460b8;"></div>
<div class="t" style="left:97.5px;top:517px;font-size:14px;line-height:20px;color:#111;-webkit-text-stroke:.45px #111;letter-spacing:0.152px;">Number of columns:</div>
<div class="t" style="left:237.5px;top:517px;font-size:14px;line-height:20px;color:#201f1e;letter-spacing:-0.536px;">21</div>
<div class="t" style="left:283.5px;top:517px;font-size:14px;line-height:20px;color:#111;-webkit-text-stroke:.45px #111;letter-spacing:0.120px;">Number of rows:</div>
<div class="t" style="left:398px;top:517px;font-size:14px;line-height:20px;color:#201f1e;letter-spacing:-0.022px;">50 (of 10000)</div>
<div class="abs" style="left:1892px;top:326px;width:26px;height:203px;background:#2e7bc0;border-radius:3px;box-shadow:0 0 3px rgba(0,0,0,.25);"></div>
<svg style="left:1898px;top:336px" width="14" height="13" viewBox="0 0 14 13"><path d="M7 1L1.500 6.500 7 12M13 1L7.500 6.500 13 12" fill="none" stroke="#fff" stroke-width="2"/></svg>
<div class="t" style="left:1905px;top:357px;width:0;height:0"><div style="position:absolute;left:0;top:0;transform-origin:0 0;transform:rotate(90deg) scale(1,1.160) translate(0,-8px);font-size:11.500px;line-height:16px;font-weight:bold;color:#fff;letter-spacing:-0.292px;white-space:nowrap">UDACITY NANODEGREE DEMO</div></div>
<!--TABLE-->
<div class="abs" style="left:65px;top:545px;width:1815px;height:382px;overflow:hidden">
<div class="abs" style="left:24px;top:34px;width:1791px;height:30px;background:#eeebee;"></div>
<div class="abs" style="left:73px;top:3px;width:1px;height:380px;background:repeating-linear-gradient(180deg,#e0dee0 0,#e0dee0 3px,transparent 3px,transparent 5px);"></div>
<div class="abs" style="left:223px;top:3px;width:1px;height:380px;background:repeating-linear-gradient(180deg,#e0dee0 0,#e0dee0 3px,transparent 3px,transparent 5px);"></div>
<div class="abs" style="left:373px;top:3px;width:1px;height:380px;background:repeating-linear-gradient(180deg,#e0dee0 0,#e0dee0 3px,transparent 3px,transparent 5px);"></div>
<div class="abs" style="left:523px;top:3px;width:1px;height:380px;background:repeating-linear-gradient(180deg,#e0dee0 0,#e0dee0 3px,transparent 3px,transparent 5px);"></div>
<div class="abs" style="left:673px;top:3px;width:1px;height:380px;background:repeating-linear-gradient(180deg,#e0dee0 0,#e0dee0 3px,transparent 3px,transparent 5px);"></div>
<div class="abs" style="left:823px;top:3px;width:1px;height:380px;background:repeating-linear-gradient(180deg,#e0dee0 0,#e0dee0 3px,transparent 3px,transparent 5px);"></div>
<div class="abs" style="left:973px;top:3px;width:1px;height:380px;background:repeating-linear-gradient(180deg,#e0dee0 0,#e0dee0 3px,transparent 3px,transparent 5px);"></div>
<div class="abs" style="left:1123px;top:3px;width:1px;height:380px;background:repeating-linear-gradient(180deg,#e0dee0 0,#e0dee0 3px,transparent 3px,transparent 5px);"></div>
<div class="abs" style="left:1273px;top:3px;width:1px;height:380px;background:repeating-linear-gradient(180deg,#e0dee0 0,#e0dee0 3px,transparent 3px,transparent 5px);"></div>
<div class="abs" style="left:1423px;top:3px;width:1px;height:380px;background:repeating-linear-gradient(180deg,#e0dee0 0,#e0dee0 3px,transparent 3px,transparent 5px);"></div>
<div class="abs" style="left:1573px;top:3px;width:1px;height:380px;background:repeating-linear-gradient(180deg,#e0dee0 0,#e0dee0 3px,transparent 3px,transparent 5px);"></div>
<div class="abs" style="left:1723px;top:3px;width:1px;height:380px;background:repeating-linear-gradient(180deg,#e0dee0 0,#e0dee0 3px,transparent 3px,transparent 5px);"></div>
<svg style="left:28px;top:14px" width="14" height="8.5" viewBox="0 0 14 8.5"><rect x=".5" y=".5" width="13" height="7.500" fill="#fff" stroke="#111" stroke-width="1"/></svg>
<div class="t" style="left:28px;top:15px;font-size:5.500px;line-height:7px;width:14px;text-align:center;color:#000;font-weight:bold;letter-spacing:-.2px">123</div>
<div class="t" style="left:46px;top:9px;font-size:14px;line-height:20px;color:#111;font-weight:bold;letter-spacing:0.279px;">Id</div>
<svg style="left:77.5px;top:14px" width="14" height="8.5" viewBox="0 0 14 8.5"><rect x=".5" y=".5" width="13" height="7.500" fill="#fff" stroke="#111" stroke-width="1"/></svg>
<div class="t" style="left:77.5px;top:15px;font-size:5.500px;line-height:7px;width:14px;text-align:center;color:#000;font-weight:bold;letter-spacing:-.2px">123</div>
<div class="t" style="left:95.5px;top:9px;font-size:14px;line-height:20px;color:#111;font-weight:bold;letter-spacing:0.625px;">age</div>
<svg style="left:227.5px;top:14px" width="14" height="8.5" viewBox="0 0 14 8.5"><rect x=".5" y=".5" width="13" height="7.500" fill="#fff" stroke="#111" stroke-width="1"/></svg>
<div class="t" style="left:227.5px;top:15px;font-size:5.500px;line-height:7px;width:14px;text-align:center;color:#000;font-weight:bold;letter-spacing:-.2px">Abc</div>
<div class="t" style="left:246px;top:9px;font-size:14px;line-height:20px;color:#111;font-weight:bold;letter-spacing:0.269px;">job</div>
<svg style="left:377.5px;top:14px" width="14" height="8.5" viewBox="0 0 14 8.5"><rect x=".5" y=".5" width="13" height="7.500" fill="#fff" stroke="#111" stroke-width="1"/></svg>
<div class="t" style="left:377.5px;top:15px;font-size:5.500px;line-height:7px;width:14px;text-align:center;color:#000;font-weight:bold;letter-spacing:-.2px">Abc</div>
<div class="t" style="left:395.5px;top:9px;font-size:14px;line-height:20px;color:#111;font-weight:bold;letter-spacing:0.370px;">marital</div>
<svg style="left:527.5px;top:14px" width="14" height="8.5" viewBox="0 0 14 8.5"><rect x=".5" y=".5" width="13" height="7.500" fill="#fff" stroke="#111" stroke-width="1"/></svg>
<div class="t" style="left:527.5px;top:15px;font-size:5.500px;line-height:7px;width:14px;text-align:center;color:#000;font-weight:bold;letter-spacing:-.2px">Abc</div>
<div class="t" style="left:546.2px;top:9px;font-size:14px;line-height:20px;color:#111;font-weight:bold;letter-spacing:-0.057px;">education</div>
<svg style="left:677.5px;top:14px" width="14" height="8.5" viewBox="0 0 14 8.5"><rect x=".5" y=".5" width="13" height="7.500" fill="#fff" stroke="#111" stroke-width="1"/></svg>
<div class="t" style="left:677.5px;top:15px;font-size:5.500px;line-height:7px;width:14px;text-align:center;color:#000;font-weight:bold;letter-spacing:-.2px">Abc</div>
<div class="t" style="left:696.2px;top:9px;font-size:14px;line-height:20px;color:#111;font-weight:bold;letter-spacing:0.201px;">default</div>
<svg style="left:827.5px;top:14px" width="14" height="8.5" viewBox="0 0 14 8.5"><rect x=".5" y=".5" width="13" height="7.500" fill="#fff" stroke="#111" stroke-width="1"/></svg>
<div class="t" style="left:827.5px;top:15px;font-size:5.500px;line-height:7px;width:14px;text-align:center;color:#000;font-weight:bold;letter-spacing:-.2px">Abc</div>
<div class="t" style="left:845.8px;top:9px;font-size:14px;line-height:20px;color:#111;font-weight:bold;letter-spacing:-0.319px;">housing</div>
<svg style="left:977.5px;top:14px" width="14" height="8.5" viewBox="0 0 14 8.5"><rect x=".5" y=".5" width="13" height="7.500" fill="#fff" stroke="#111" stroke-width="1"/></svg>
<div class="t" style="left:977.5px;top:15px;font-size:5.500px;line-height:7px;width:14px;text-align:center;color:#000;font-weight:bold;letter-spacing:-.2px">Abc</div>
<div class="t" style="left:995.8px;top:9px;font-size:14px;line-height:20px;color:#111;font-weight:bold;letter-spacing:0.055px;">loan</div>
<svg style="left:1127.5px;top:14px" width="14" height="8.5" viewBox="0 0 14 8.5"><rect x=".5" y=".5" width="13" height="7.500" fill="#fff" stroke="#111" stroke-width="1"/></svg>
<div class="t" style="left:1127.5px;top:15px;font-size:5.500px;line-height:7px;width:14px;text-align:center;color:#000;font-weight:bold;letter-spacing:-.2px">Abc</div>
<div class="t" style="left:1146px;top:9px;font-size:14px;line-height:20px;color:#111;font-weight:bold;letter-spacing:-0.041px;">contact</div>
<svg style="left:1277.5px;top:14px" width="14" height="8.5" viewBox="0 0 14 8.5"><rect x=".5" y=".5" width="13" height="7.500" fill="#fff" stroke="#111" stroke-width="1"/></svg>
<div class="t" style="left:1277.5px;top:15px;font-size:5.500px;line-height:7px;width:14px;text-align:center;color:#000;font-weight:bold;letter-spacing:-.2px">Abc</div>
<div class="t" style="left:1296px;top:9px;font-size:14px;line-height:20px;color:#111;font-weight:bold;letter-spacing:0.047px;">month</div>
<svg style="left:1427.5px;top:14px" width="14" height="8.5" viewBox="0 0 14 8.5"><rect x=".5" y=".5" width="13" height="7.500" fill="#fff" stroke="#111" stroke-width="1"/></svg>
<div class="t" style="left:1427.5px;top:15px;font-size:5.500px;line-height:7px;width:14px;text-align:center;color:#000;font-weight:bold;letter-spacing:-.2px">Abc</div>
<div class="t" style="left:1446px;top:9px;font-size:14px;line-height:20px;color:#111;font-weight:bold;letter-spacing:-0.105px;">day_of_week</div>
<svg style="left:1577.5px;top:14px" width="14" height="8.5" viewBox="0 0 14 8.5"><rect x=".5" y=".5" width="13" height="7.500" fill="#fff" stroke="#111" stroke-width="1"/></svg>
<div class="t" style="left:1577.5px;top:15px;font-size:5.500px;line-height:7px;width:14px;text-align:center;color:#000;font-weight:bold;letter-spacing:-.2px">123</div>
<div class="t" style="left:1596px;top:9px;font-size:14px;line-height:20px;color:#111;font-weight:bold;letter-spacing:0.126px;">duration</div>
<svg style="left:1727.5px;top:14px" width="14" height="8.5" viewBox="0 0 14 8.5"><rect x=".5" y=".5" width="13" height="7.500" fill="#fff" stroke="#111" stroke-width="1"/></svg>
<div class="t" style="left:1727.5px;top:15px;font-size:5.500px;line-height:7px;width:14px;text-align:center;color:#000;font-weight:bold;letter-spacing:-.2px">123</div>
<div class="t" style="left:1746.5px;top:9px;font-size:14px;line-height:20px;color:#111;font-weight:bold;letter-spacing:-0.044px;">campaign</div>
<div class="abs" style="left:24px;top:32px;width:1791px;height:2px;background:#a19ea1;"></div>
<div class="t" style="left:29px;top:40.4px;font-size:14px;line-height:20px;color:#201f1e;letter-spacing:0.214px;">1</div>
<div class="t" style="left:78px;top:40.4px;font-size:14px;line-height:20px;color:#201f1e;letter-spacing:0.214px;">57</div>
<div class="t" style="left:228px;top:40.4px;font-size:14px;line-height:20px;color:#201f1e;letter-spacing:-0.204px;">technician</div>
<div class="t" style="left:378px;top:40.4px;font-size:14px;line-height:20px;color:#201f1e;letter-spacing:-0.065px;">married</div>
<div class="t" style="left:528px;top:40.4px;font-size:14px;line-height:20px;color:#201f1e;letter-spacing:-0.166px;">high.school</div>
<div class="t" style="left:678px;top:40.4px;font-size:14px;line-height:20px;color:#201f1e;letter-spacing:0.214px;">no</div>
<div class="t" style="left:828px;top:40.4px;font-size:14px;line-height:20px;color:#201f1e;letter-spacing:0.214px;">no</div>
<div class="t" style="left:978px;top:40.4px;font-size:14px;line-height:20px;color:#201f1e;letter-spacing:-0.595px;">yes</div>
<div class="t" style="left:1128px;top:40.4px;font-size:14px;line-height:20px;color:#201f1e;letter-spacing:-0.294px;">cellular</div>
<div class="t" style="left:1278px;top:40.4px;font-size:14px;line-height:20px;color:#201f1e;letter-spacing:-0.149px;">may</div>
<div class="t" style="left:1428px;top:40.4px;font-size:14px;line-height:20px;color:#201f1e;letter-spacing:0.255px;">mon</div>
<div class="t" style="left:1578px;top:40.4px;font-size:14px;line-height:20px;color:#201f1e;letter-spacing:0.214px;">371</div>
<div class="t" style="left:1728px;top:40.4px;font-size:14px;line-height:20px;color:#201f1e;letter-spacing:0.214px;">1</div>
<div class="t" style="left:29px;top:70.4px;font-size:14px;line-height:20px;color:#201f1e;letter-spacing:0.214px;">2</div>
<div class="t" style="left:78px;top:70.4px;font-size:14px;line-height:20px;color:#201f1e;letter-spacing:0.214px;">55</div>
<div class="t" style="left:228px;top:70.4px;font-size:14px;line-height:20px;color:#201f1e;letter-spacing:0.137px;">unknown</div>
<div class="t" style="left:378px;top:70.4px;font-size:14px;line-height:20px;color:#201f1e;letter-spacing:-0.065px;">married</div>
<div class="t" style="left:528px;top:70.4px;font-size:14px;line-height:20px;color:#201f1e;letter-spacing:0.137px;">unknown</div>
<div class="t" style="left:678px;top:70.4px;font-size:14px;line-height:20px;color:#201f1e;letter-spacing:0.137px;">unknown</div>
<div class="t" style="left:828px;top:70.4px;font-size:14px;line-height:20px;color:#201f1e;letter-spacing:-0.595px;">yes</div>
<div class="t" style="left:978px;top:70.4px;font-size:14px;line-height:20px;color:#201f1e;letter-spacing:0.214px;">no</div>
<div class="t" style="left:1128px;top:70.4px;font-size:14px;line-height:20px;color:#201f1e;letter-spacing:-0.056px;">telephone</div>
<div class="t" style="left:1278px;top:70.4px;font-size:14px;line-height:20px;color:#201f1e;letter-spacing:-0.149px;">may</div>
<div class="t" style="left:1428px;top:70.4px;font-size:14px;line-height:20px;color:#201f1e;letter-spacing:0.513px;">thu</div>
<div class="t" style="left:1578px;top:70.4px;font-size:14px;line-height:20px;color:#201f1e;letter-spacing:0.214px;">285</div>
<div class="t" style="left:1728px;top:70.4px;font-size:14px;line-height:20px;color:#201f1e;letter-spacing:0.214px;">2</div>
<div class="t" style="left:29px;top:100.4px;font-size:14px;line-height:20px;color:#201f1e;letter-spacing:0.214px;">3</div>
<div class="t" style="left:78px;top:100.4px;font-size:14px;line-height:20px;color:#201f1e;letter-spacing:0.214px;">33</div>
<div class="t" style="left:228px;top:100.4px;font-size:14px;line-height:20px;color:#201f1e;letter-spacing:-0.053px;">blue-collar</div>
<div class="t" style="left:378px;top:100.4px;font-size:14px;line-height:20px;color:#201f1e;letter-spacing:-0.065px;">married</div>
<div class="t" style="left:528px;top:100.4px;font-size:14px;line-height:20px;color:#201f1e;letter-spacing:-0.420px;">basic.9y</div>
<div class="t" style="left:678px;top:100.4px;font-size:14px;line-height:20px;color:#201f1e;letter-spacing:0.214px;">no</div>
<div class="t" style="left:828px;top:100.4px;font-size:14px;line-height:20px;color:#201f1e;letter-spacing:0.214px;">no</div>
<div class="t" style="left:978px;top:100.4px;font-size:14px;line-height:20px;color:#201f1e;letter-spacing:0.214px;">no</div>
<div class="t" style="left:1128px;top:100.4px;font-size:14px;line-height:20px;color:#201f1e;letter-spacing:-0.294px;">cellular</div>
<div class="t" style="left:1278px;top:100.4px;font-size:14px;line-height:20px;color:#201f1e;letter-spacing:-0.149px;">may</div>
<div class="t" style="left:1428px;top:100.4px;font-size:14px;line-height:20px;color:#201f1e;letter-spacing:0.113px;">fri</div>
<div class="t" style="left:1578px;top:100.4px;font-size:14px;line-height:20px;color:#201f1e;letter-spacing:0.214px;">52</div>
<div class="t" style="left:1728px;top:100.4px;font-size:14px;line-height:20px;color:#201f1e;letter-spacing:0.214px;">1</div>
<div class="t" style="left:29px;top:130.4px;font-size:14px;line-height:20px;color:#201f1e;letter-spacing:0.214px;">4</div>
<div class="t" style="left:78px;top:130.4px;font-size:14px;line-height:20px;color:#201f1e;letter-spacing:0.214px;">36</div>
<div class="t" style="left:228px;top:130.4px;font-size:14px;line-height:20px;color:#201f1e;letter-spacing:-0.170px;">admin.</div>
<div class="t" style="left:378px;top:130.4px;font-size:14px;line-height:20px;color:#201f1e;letter-spacing:-0.065px;">married</div>
<div class="t" style="left:528px;top:130.4px;font-size:14px;line-height:20px;color:#201f1e;letter-spacing:-0.166px;">high.school</div>
<div class="t" style="left:678px;top:130.4px;font-size:14px;line-height:20px;color:#201f1e;letter-spacing:0.214px;">no</div>
<div class="t" style="left:828px;top:130.4px;font-size:14px;line-height:20px;color:#201f1e;letter-spacing:0.214px;">no</div>
<div class="t" style="left:978px;top:130.4px;font-size:14px;line-height:20px;color:#201f1e;letter-spacing:0.214px;">no</div>
<div class="t" style="left:1128px;top:130.4px;font-size:14px;line-height:20px;color:#201f1e;letter-spacing:-0.056px;">telephone</div>
<div class="t" style="left:1278px;top:130.4px;font-size:14px;line-height:20px;color:#201f1e;letter-spacing:0.106px;">jun</div>
<div class="t" style="left:1428px;top:130.4px;font-size:14px;line-height:20px;color:#201f1e;letter-spacing:0.113px;">fri</div>
<div class="t" style="left:1578px;top:130.4px;font-size:14px;line-height:20px;color:#201f1e;letter-spacing:0.214px;">355</div>
<div class="t" style="left:1728px;top:130.4px;font-size:14px;line-height:20px;color:#201f1e;letter-spacing:0.214px;">4</div>
<div class="t" style="left:29px;top:160.4px;font-size:14px;line-height:20px;color:#201f1e;letter-spacing:0.214px;">5</div>
<div class="t" style="left:78px;top:160.4px;font-size:14px;line-height:20px;color:#201f1e;letter-spacing:0.214px;">27</div>
<div class="t" style="left:228px;top:160.4px;font-size:14px;line-height:20px;color:#201f1e;letter-spacing:-0.165px;">housemaid</div>
<div class="t" style="left:378px;top:160.4px;font-size:14px;line-height:20px;color:#201f1e;letter-spacing:-0.065px;">married</div>
<div class="t" style="left:528px;top:160.4px;font-size:14px;line-height:20px;color:#201f1e;letter-spacing:-0.166px;">high.school</div>
<div class="t" style="left:678px;top:160.4px;font-size:14px;line-height:20px;color:#201f1e;letter-spacing:0.214px;">no</div>
<div class="t" style="left:828px;top:160.4px;font-size:14px;line-height:20px;color:#201f1e;letter-spacing:-0.595px;">yes</div>
<div class="t" style="left:978px;top:160.4px;font-size:14px;line-height:20px;color:#201f1e;letter-spacing:0.214px;">no</div>
<div class="t" style="left:1128px;top:160.4px;font-size:14px;line-height:20px;color:#201f1e;letter-spacing:-0.294px;">cellular</div>
<div class="t" style="left:1278px;top:160.4px;font-size:14px;line-height:20px;color:#201f1e;letter-spacing:-0.002px;">jul</div>
<div class="t" style="left:1428px;top:160.4px;font-size:14px;line-height:20px;color:#201f1e;letter-spacing:0.113px;">fri</div>
<div class="t" style="left:1578px;top:160.4px;font-size:14px;line-height:20px;color:#201f1e;letter-spacing:0.214px;">189</div>
<div class="t" style="left:1728px;top:160.4px;font-size:14px;line-height:20px;color:#201f1e;letter-spacing:0.214px;">2</div>
<div class="t" style="left:29px;top:190.4px;font-size:14px;line-height:20px;color:#201f1e;letter-spacing:0.214px;">6</div>
<div class="t" style="left:78px;top:190.4px;font-size:14px;line-height:20px;color:#201f1e;letter-spacing:0.214px;">58</div>
<div class="t" style="left:228px;top:190.4px;font-size:14px;line-height:20px;color:#201f1e;letter-spacing:0.045px;">retired</div>
<div class="t" style="left:378px;top:190.4px;font-size:14px;line-height:20px;color:#201f1e;letter-spacing:-0.065px;">married</div>
<div class="t" style="left:528px;top:190.4px;font-size:14px;line-height:20px;color:#201f1e;letter-spacing:-0.284px;">professional.course</div>
<div class="t" style="left:678px;top:190.4px;font-size:14px;line-height:20px;color:#201f1e;letter-spacing:0.214px;">no</div>
<div class="t" style="left:828px;top:190.4px;font-size:14px;line-height:20px;color:#201f1e;letter-spacing:-0.595px;">yes</div>
<div class="t" style="left:978px;top:190.4px;font-size:14px;line-height:20px;color:#201f1e;letter-spacing:-0.595px;">yes</div>
<div class="t" style="left:1128px;top:190.4px;font-size:14px;line-height:20px;color:#201f1e;letter-spacing:-0.294px;">cellular</div>
<div class="t" style="left:1278px;top:190.4px;font-size:14px;line-height:20px;color:#201f1e;letter-spacing:-0.002px;">jul</div>
<div class="t" style="left:1428px;top:190.4px;font-size:14px;line-height:20px;color:#201f1e;letter-spacing:0.113px;">fri</div>
<div class="t" style="left:1578px;top:190.4px;font-size:14px;line-height:20px;color:#201f1e;letter-spacing:0.214px;">605</div>
<div class="t" style="left:1728px;top:190.4px;font-size:14px;line-height:20px;color:#201f1e;letter-spacing:0.214px;">1</div>
<div class="t" style="left:29px;top:220.4px;font-size:14px;line-height:20px;color:#201f1e;letter-spacing:0.214px;">7</div>
<div class="t" style="left:78px;top:220.4px;font-size:14px;line-height:20px;color:#201f1e;letter-spacing:0.214px;">48</div>
<div class="t" style="left:228px;top:220.4px;font-size:14px;line-height:20px;color:#201f1e;letter-spacing:-0.543px;">services</div>
<div class="t" style="left:378px;top:220.4px;font-size:14px;line-height:20px;color:#201f1e;letter-spacing:-0.065px;">married</div>
<div class="t" style="left:528px;top:220.4px;font-size:14px;line-height:20px;color:#201f1e;letter-spacing:-0.166px;">high.school</div>
<div class="t" style="left:678px;top:220.4px;font-size:14px;line-height:20px;color:#201f1e;letter-spacing:0.137px;">unknown</div>
<div class="t" style="left:828px;top:220.4px;font-size:14px;line-height:20px;color:#201f1e;letter-spacing:-0.595px;">yes</div>
<div class="t" style="left:978px;top:220.4px;font-size:14px;line-height:20px;color:#201f1e;letter-spacing:0.214px;">no</div>
<div class="t" style="left:1128px;top:220.4px;font-size:14px;line-height:20px;color:#201f1e;letter-spacing:-0.056px;">telephone</div>
<div class="t" style="left:1278px;top:220.4px;font-size:14px;line-height:20px;color:#201f1e;letter-spacing:-0.149px;">may</div>
<div class="t" style="left:1428px;top:220.4px;font-size:14px;line-height:20px;color:#201f1e;letter-spacing:-0.228px;">wed</div>
<div class="t" style="left:1578px;top:220.4px;font-size:14px;line-height:20px;color:#201f1e;letter-spacing:0.214px;">243</div>
<div class="t" style="left:1728px;top:220.4px;font-size:14px;line-height:20px;color:#201f1e;letter-spacing:0.214px;">1</div>
<div class="t" style="left:29px;top:250.4px;font-size:14px;line-height:20px;color:#201f1e;letter-spacing:0.214px;">8</div>
<div class="t" style="left:78px;top:250.4px;font-size:14px;line-height:20px;color:#201f1e;letter-spacing:0.214px;">51</div>
<div class="t" style="left:228px;top:250.4px;font-size:14px;line-height:20px;color:#201f1e;letter-spacing:-0.170px;">admin.</div>
<div class="t" style="left:378px;top:250.4px;font-size:14px;line-height:20px;color:#201f1e;letter-spacing:-0.115px;">divorced</div>
<div class="t" style="left:528px;top:250.4px;font-size:14px;line-height:20px;color:#201f1e;letter-spacing:-0.093px;">university.degree</div>
<div class="t" style="left:678px;top:250.4px;font-size:14px;line-height:20px;color:#201f1e;letter-spacing:0.137px;">unknown</div>
<div class="t" style="left:828px;top:250.4px;font-size:14px;line-height:20px;color:#201f1e;letter-spacing:-0.595px;">yes</div>
<div class="t" style="left:978px;top:250.4px;font-size:14px;line-height:20px;color:#201f1e;letter-spacing:0.214px;">no</div>
<div class="t" style="left:1128px;top:250.4px;font-size:14px;line-height:20px;color:#201f1e;letter-spacing:-0.294px;">cellular</div>
<div class="t" style="left:1278px;top:250.4px;font-size:14px;line-height:20px;color:#201f1e;letter-spacing:-0.119px;">aug</div>
<div class="t" style="left:1428px;top:250.4px;font-size:14px;line-height:20px;color:#201f1e;letter-spacing:0.513px;">thu</div>
<div class="t" style="left:1578px;top:250.4px;font-size:14px;line-height:20px;color:#201f1e;letter-spacing:0.214px;">24</div>
<div class="t" style="left:1728px;top:250.4px;font-size:14px;line-height:20px;color:#201f1e;letter-spacing:0.214px;">7</div>
<div class="t" style="left:29px;top:280.4px;font-size:14px;line-height:20px;color:#201f1e;letter-spacing:0.214px;">9</div>
<div class="t" style="left:78px;top:280.4px;font-size:14px;line-height:20px;color:#201f1e;letter-spacing:0.214px;">24</div>
<div class="t" style="left:228px;top:280.4px;font-size:14px;line-height:20px;color:#201f1e;letter-spacing:-0.014px;">entrepreneur</div>
<div class="t" style="left:378px;top:280.4px;font-size:14px;line-height:20px;color:#201f1e;letter-spacing:-0.065px;">married</div>
<div class="t" style="left:528px;top:280.4px;font-size:14px;line-height:20px;color:#201f1e;letter-spacing:-0.093px;">university.degree</div>
<div class="t" style="left:678px;top:280.4px;font-size:14px;line-height:20px;color:#201f1e;letter-spacing:0.214px;">no</div>
<div class="t" style="left:828px;top:280.4px;font-size:14px;line-height:20px;color:#201f1e;letter-spacing:-0.595px;">yes</div>
<div class="t" style="left:978px;top:280.4px;font-size:14px;line-height:20px;color:#201f1e;letter-spacing:-0.595px;">yes</div>
<div class="t" style="left:1128px;top:280.4px;font-size:14px;line-height:20px;color:#201f1e;letter-spacing:-0.056px;">telephone</div>
<div class="t" style="left:1278px;top:280.4px;font-size:14px;line-height:20px;color:#201f1e;letter-spacing:0.106px;">jun</div>
<div class="t" style="left:1428px;top:280.4px;font-size:14px;line-height:20px;color:#201f1e;letter-spacing:-0.228px;">wed</div>
<div class="t" style="left:1578px;top:280.4px;font-size:14px;line-height:20px;color:#201f1e;letter-spacing:0.214px;">126</div>
<div class="t" style="left:1728px;top:280.4px;font-size:14px;line-height:20px;color:#201f1e;letter-spacing:0.214px;">4</div>
<div class="t" style="left:29px;top:310.4px;font-size:14px;line-height:20px;color:#201f1e;letter-spacing:0.214px;">10</div>
<div class="t" style="left:78px;top:310.4px;font-size:14px;line-height:20px;color:#201f1e;letter-spacing:0.214px;">36</div>
<div class="t" style="left:228px;top:310.4px;font-size:14px;line-height:20px;color:#201f1e;letter-spacing:-0.204px;">technician</div>
<div class="t" style="left:378px;top:310.4px;font-size:14px;line-height:20px;color:#201f1e;letter-spacing:-0.115px;">divorced</div>
<div class="t" style="left:528px;top:310.4px;font-size:14px;line-height:20px;color:#201f1e;letter-spacing:-0.284px;">professional.course</div>
<div class="t" style="left:678px;top:310.4px;font-size:14px;line-height:20px;color:#201f1e;letter-spacing:0.214px;">no</div>
<div class="t" style="left:828px;top:310.4px;font-size:14px;line-height:20px;color:#201f1e;letter-spacing:-0.595px;">yes</div>
<div class="t" style="left:978px;top:310.4px;font-size:14px;line-height:20px;color:#201f1e;letter-spacing:-0.595px;">yes</div>
<div class="t" style="left:1128px;top:310.4px;font-size:14px;line-height:20px;color:#201f1e;letter-spacing:-0.294px;">cellular</div>
<div class="t" style="left:1278px;top:310.4px;font-size:14px;line-height:20px;color:#201f1e;letter-spacing:-0.002px;">jul</div>
<div class="t" style="left:1428px;top:310.4px;font-size:14px;line-height:20px;color:#201f1e;letter-spacing:0.255px;">mon</div>
<div class="t" style="left:1578px;top:310.4px;font-size:14px;line-height:20px;color:#201f1e;letter-spacing:0.214px;">43</div>
<div class="t" style="left:1728px;top:310.4px;font-size:14px;line-height:20px;color:#201f1e;letter-spacing:0.214px;">4</div>
<div class="t" style="left:29px;top:340.4px;font-size:14px;line-height:20px;color:#201f1e;letter-spacing:0.733px;">11</div>
<div class="t" style="left:78px;top:340.4px;font-size:14px;line-height:20px;color:#201f1e;letter-spacing:0.214px;">34</div>
<div class="t" style="left:228px;top:340.4px;font-size:14px;line-height:20px;color:#201f1e;letter-spacing:-0.053px;">blue-collar</div>
<div class="t" style="left:378px;top:340.4px;font-size:14px;line-height:20px;color:#201f1e;letter-spacing:-0.065px;">married</div>
<div class="t" style="left:528px;top:340.4px;font-size:14px;line-height:20px;color:#201f1e;letter-spacing:-0.420px;">basic.9y</div>
<div class="t" style="left:678px;top:340.4px;font-size:14px;line-height:20px;color:#201f1e;letter-spacing:0.214px;">no</div>
<div class="t" style="left:828px;top:340.4px;font-size:14px;line-height:20px;color:#201f1e;letter-spacing:0.214px;">no</div>
<div class="t" style="left:978px;top:340.4px;font-size:14px;line-height:20px;color:#201f1e;letter-spacing:0.214px;">no</div>
<div class="t" style="left:1128px;top:340.4px;font-size:14px;line-height:20px;color:#201f1e;letter-spacing:-0.294px;">cellular</div>
<div class="t" style="left:1278px;top:340.4px;font-size:14px;line-height:20px;color:#201f1e;letter-spacing:-0.149px;">may</div>
<div class="t" style="left:1428px;top:340.4px;font-size:14px;line-height:20px;color:#201f1e;letter-spacing:0.113px;">fri</div>
<div class="t" style="left:1578px;top:340.4px;font-size:14px;line-height:20px;color:#201f1e;letter-spacing:0.214px;">451</div>
<div class="t" style="left:1728px;top:340.4px;font-size:14px;line-height:20px;color:#201f1e;letter-spacing:0.214px;">3</div>
<div class="t" style="left:29px;top:370.4px;font-size:14px;line-height:20px;color:#201f1e;letter-spacing:0.214px;">12</div>
<div class="t" style="left:78px;top:370.4px;font-size:14px;line-height:20px;color:#201f1e;letter-spacing:0.214px;">42</div>
<div class="t" style="left:228px;top:370.4px;font-size:14px;line-height:20px;color:#201f1e;letter-spacing:-0.053px;">blue-collar</div>
<div class="t" style="left:378px;top:370.4px;font-size:14px;line-height:20px;color:#201f1e;letter-spacing:-0.263px;">single</div>
<div class="t" style="left:528px;top:370.4px;font-size:14px;line-height:20px;color:#201f1e;letter-spacing:-0.420px;">basic.4y</div>
<div class="t" style="left:678px;top:370.4px;font-size:14px;line-height:20px;color:#201f1e;letter-spacing:0.214px;">no</div>
<div class="t" style="left:828px;top:370.4px;font-size:14px;line-height:20px;color:#201f1e;letter-spacing:-0.595px;">yes</div>
<div class="t" style="left:978px;top:370.4px;font-size:14px;line-height:20px;color:#201f1e;letter-spacing:0.214px;">no</div>
<div class="t" style="left:1128px;top:370.4px;font-size:14px;line-height:20px;color:#201f1e;letter-spacing:-0.294px;">cellular</div>
<div class="t" style="left:1278px;top:370.4px;font-size:14px;line-height:20px;color:#201f1e;letter-spacing:-0.149px;">may</div>
<div class="t" style="left:1428px;top:370.4px;font-size:14px;line-height:20px;color:#201f1e;letter-spacing:0.513px;">thu</div>
<div class="t" style="left:1578px;top:370.4px;font-size:14px;line-height:20px;color:#201f1e;letter-spacing:0.214px;">560</div>
<div class="t" style="left:1728px;top:370.4px;font-size:14px;line-height:20px;color:#201f1e;letter-spacing:0.214px;">3</div>
</div>
<div class="abs" style="left:1880px;top:579px;width:16px;height:349px;background:#f6f3f6;"></div>
<div class="abs" style="left:1881px;top:596px;width:13px;height:54px;background:#c1bec1;"></div>
<svg style="left:1883.5px;top:585px" width="8" height="5" viewBox="0 0 8 5"><path d="M4 0l4 5H0z" fill="#a3a0a3"/></svg>
<svg style="left:1883.5px;top:915px" width="8" height="5" viewBox="0 0 8 5"><path d="M4 5l4-5H0z" fill="#505050"/></svg>
<div class="abs" style="left:89px;top:928px;width:1791px;height:16px;background:#f6f3f6;"></div>
<div class="abs" style="left:106px;top:929px;width:1310px;height:13px;background:#c1bec1;"></div>
<svg style="left:94px;top:931.5px" width="5" height="8" viewBox="0 0 5 8"><path d="M0 4l5-4v8z" fill="#a3a0a3"/></svg>
<svg style="left:1867.5px;top:931.5px" width="5" height="8" viewBox="0 0 5 8"><path d="M5 4L0 0v8z" fill="#505050"/></svg>
<div class="abs" style="left:1880px;top:928px;width:16px;height:16px;background:#dcdadc;"></div>
<!--BOTTOM-->
<div class="abs" style="left:0px;top:944px;width:1920px;height:1px;background:#d5d3d5;"></div>
<div class="abs" style="left:0px;top:945px;width:1920px;height:55px;background:#fff;"></div>
<svg style="left:22px;top:964px" width="12" height="16" viewBox="0 0 12 16"><path d="M.6.600h7.400l3.400 3.400v11.400H.6z" fill="#fff" stroke="#8f8f8f" stroke-width="1.100"/><path d="M8 .6v3.400h3.400" fill="none" stroke="#9a9a9a" stroke-width="1"/><path d="M2.500 5.500h7M2.500 7.500h7M2.500 9.500h7M2.500 11.500h7M2.500 13.500h7M2.500 3.500h4" stroke="#8a8a8a" stroke-width="1"/></svg>
<div class="t" style="left:49px;top:962.5px;font-size:14px;line-height:20px;color:#3c4043;letter-spacing:-0.452px;">model_data.txt</div>
<svg style="left:208px;top:969px" width="10" height="6" viewBox="0 0 10 6"><path d="M.7 5.500L5 1.200l4.300 4.300" fill="none" stroke="#5f6368" stroke-width="1.600"/></svg>
<div class="abs" style="left:236px;top:952px;width:1px;height:42px;background:#d5d5d5;"></div>
<svg style="left:255px;top:964px" width="12" height="16" viewBox="0 0 12 16"><path d="M.6.600h7.400l3.400 3.400v11.400H.6z" fill="#fff" stroke="#8f8f8f" stroke-width="1.100"/><path d="M8 .6v3.400h3.400" fill="none" stroke="#9a9a9a" stroke-width="1"/><path d="M2.500 5.500h7M2.500 7.500h7M2.500 9.500h7M2.500 11.500h7M2.500 13.500h7M2.500 3.500h4" stroke="#8a8a8a" stroke-width="1"/></svg>
<div class="t" style="left:282px;top:962.5px;font-size:14px;line-height:20px;color:#3c4043;letter-spacing:-0.520px;">metrics_data.txt</div>
<svg style="left:441px;top:969px" width="10" height="6" viewBox="0 0 10 6"><path d="M.7 5.500L5 1.200l4.300 4.300" fill="none" stroke="#5f6368" stroke-width="1.600"/></svg>
<div class="abs" style="left:469px;top:952px;width:1px;height:42px;background:#d5d5d5;"></div>
<svg style="left:488px;top:964px" width="12" height="16" viewBox="0 0 12 16"><path d="M.6.600h7.400l3.400 3.400v11.400H.6z" fill="#fff" stroke="#8f8f8f" stroke-width="1.100"/><path d="M8 .6v3.400h3.400" fill="none" stroke="#9a9a9a" stroke-width="1"/></svg>
<div class="t" style="left:515.5px;top:962.5px;font-size:14px;line-height:20px;color:#3c4043;letter-spacing:-0.456px;">aml-pipelines-wi....ipynb</div>
<svg style="left:674px;top:969px" width="10" height="6" viewBox="0 0 10 6"><path d="M.7 5.500L5 1.200l4.300 4.300" fill="none" stroke="#5f6368" stroke-width="1.600"/></svg>
<div class="abs" style="left:702px;top:952px;width:1px;height:42px;background:#d5d5d5;"></div>
<div class="abs" style="left:1807px;top:956px;width:76px;height:32px;background:#fff;border:1px solid #dadce0;border-radius:4px;"></div>
<div class="t" style="left:1823px;top:962.5px;font-size:13px;line-height:18px;color:#2a6cc0;letter-spacing:-0.518px;">Show all</div>
<svg style="left:1897px;top:967px" width="10" height="10" viewBox="0 0 10 10"><path d="M.8.800l8.400 8.400M9.200.8L.8 9.200" stroke="#5f6368" stroke-width="1.600" fill="none"/></svg>
<div class="abs" style="left:0px;top:1000px;width:1920px;height:45px;background:#000;"></div>
<div class="abs" style="left:245px;top:1000px;width:48px;height:40px;background:#333;"></div>
<div class="abs" style="left:0px;top:1040px;width:48px;height:5px;background:#1c1c1c;"></div>
<div class="abs" style="left:392px;top:1040px;width:1528px;height:5px;background:#1e1e1e;"></div>
<div class="abs" style="left:605px;top:1040px;width:159px;height:5px;background:#2f2f2f;"></div>
<div class="abs" style="left:48px;top:1040px;width:344px;height:5px;background:#f0f0f0;"></div>
<div class="abs" style="left:200px;top:1038px;width:40px;height:2.5px;background:#76b9ed;"></div>
<div class="abs" style="left:245px;top:1038px;width:48px;height:2.5px;background:#76b9ed;"></div>
<div class="abs" style="left:298px;top:1038px;width:40px;height:2.5px;background:#76b9ed;"></div>
<div class="abs" style="left:347px;top:1038px;width:40px;height:2.5px;background:#76b9ed;"></div>
<svg style="left:16px;top:1012px" width="17" height="16" viewBox="0 0 17 16"><path d="M0 2.300l7-1v6.400H0zM7.800 1.200L17 0v7.700H7.800zM0 8.500h7v6.400l-7-1zM7.800 8.500H17V16l-9.200-1.300z" fill="#fff"/></svg>
<svg style="left:63px;top:1011px" width="18" height="18" viewBox="0 0 18 18"><circle cx="11.500" cy="6.500" r="5.200" fill="none" stroke="#fff" stroke-width="1.300"/><path d="M7.800 10.200L1 17" stroke="#fff" stroke-width="1.400"/></svg>
<svg style="left:112px;top:1012px" width="16" height="15" viewBox="0 0 16 15"><path d="M.6 3.500h10v8H.6zM.6 1.800V.6h10v1.200M.6 13.200v1.200h10v-1.200M14.500 0v3.500M14.500 7v8" fill="none" stroke="#fff" stroke-width="1.200"/><rect x="13.300" y="4" width="2.600" height="2.600" fill="#fff"/></svg>
<svg style="left:159px;top:1007px" width="24" height="24" viewBox="0 0 24 24"><path d="M6.800 13.200H20.300A7 7 0 1 0 18.700 18" fill="none" stroke="#3fbdf3" stroke-width="4.200"/><path d="M3 21.500C.5 18.500 3.500 11 10 6c4.500-3.500 9.500-5 11.500-3.500 1.300 1 1 3.300 0 5.300.3-1.800 0-3-.9-3.600C18.800 3 14 4.800 10 8.200 5 12.500 2.300 18.300 4.500 21z" fill="#f2c418"/></svg>
<svg style="left:209px;top:1009px" width="22" height="22" viewBox="0 0 22 22"><path d="M1 3h7l2 2h11v14H1z" fill="#f3c74f"/><path d="M1 7h20v12H1z" fill="#fbdc7a"/><path d="M6 12h10v7H6z" fill="#3f9bdc"/><path d="M8 15h6v4H8z" fill="#fbdc7a"/></svg>
<svg style="left:258px;top:1009px" width="22" height="22" viewBox="0 0 22 22"><circle cx="11" cy="11" r="11" fill="#db4437"/><path d="M11 11L1.500 5.500A11 11 0 0 0 8 21.600z" fill="#0f9d58"/><path d="M11 11l-3 10.600A11 11 0 0 0 21.600 8H11z" fill="#ffcd40"/><path d="M11 11L1.500 5.500A11 11 0 0 1 21.600 8H11z" fill="#db4437"/><circle cx="11" cy="11" r="5" fill="#fff"/><circle cx="11" cy="11" r="4" fill="#4285f4"/></svg>
<svg style="left:305px;top:1008px" width="24" height="24" viewBox="0 0 24 24"><path d="M8 2l14 1.500-3 17L3 19z" fill="#9fd3e6"/><path d="M8 2l14 1.500-1 5L6.500 7z" fill="#d8eef6"/><path d="M3 19l16 1.500 1-3L5 16z" fill="#6b8f9c"/><path d="M19 20.500l3-17 .8 1-2.600 16.500z" fill="#e8e8e8"/></svg>
<svg style="left:354px;top:1007px" width="26" height="26" viewBox="0 0 26 26"><path d="M13 0l6.500 6.500L13 13 6.500 6.500z" fill="#e8675b"/><path d="M19.500 6.500L26 13l-6.500 6.500L13 13z" fill="#6fbf5a"/><path d="M6.500 6.500L13 13l-6.500 6.500L0 13z" fill="#5b8def"/><path d="M13 13l6.500 6.500L13 26l-6.500-6.500z" fill="#e9d45a"/><path d="M13 4v17M13 11l5 4" stroke="#111" stroke-width="1.600" fill="none"/><circle cx="13" cy="8" r="1.900" fill="#111"/><circle cx="13" cy="20" r="1.900" fill="#111"/><circle cx="18" cy="15" r="1.900" fill="#111"/></svg>
<svg style="left:1737px;top:1016px" width="12" height="7" viewBox="0 0 12 7"><path d="M.6 6.400L6 1l5.400 5.400" fill="none" stroke="#fff" stroke-width="1.200"/></svg>
<svg style="left:1759px;top:1014px" width="16" height="13" viewBox="0 0 16 13"><path d="M4 .5h11.500v8.500H4M.5.500h3.500v3H.5zM2.200 3.500v9h4M9.800 9v3M6.500 12.500h6.500" fill="none" stroke="#fff" stroke-width="1"/></svg>
<svg style="left:1783px;top:1014px" width="7" height="12" viewBox="0 0 7 12"><path d="M.5 4h2l3.500-3.500v11L2.500 8h-2z" fill="none" stroke="#fff" stroke-width="1"/></svg>
<svg style="left:1790px;top:1019px" width="9" height="9" viewBox="0 0 9 9"><circle cx="4.500" cy="4.500" r="4.500" fill="#e0323f"/><path d="M2.600 2.600l3.800 3.800M6.400 2.600L2.600 6.400" stroke="#fff" stroke-width="1.100"/></svg>
<div class="t" style="left:1810.5px;top:1003px;font-size:12px;line-height:17px;color:#fff;letter-spacing:-0.101px;">11:04 AM</div>
<div class="t" style="left:1812.5px;top:1020.5px;font-size:12px;line-height:17px;color:#fff;letter-spacing:-0.214px;">1/9/2021</div>
<svg style="left:1879px;top:1012px" width="16" height="16" viewBox="0 0 16 16"><path d="M.6.600h14.800v11H10l-2 2.500-2-2.500H.6z" fill="none" stroke="#fff" stroke-width="1.100"/></svg>
<div class="abs" style="left:1915px;top:1000px;width:1px;height:45px;background:#5a5a5a;"></div>
</div></body></html>
